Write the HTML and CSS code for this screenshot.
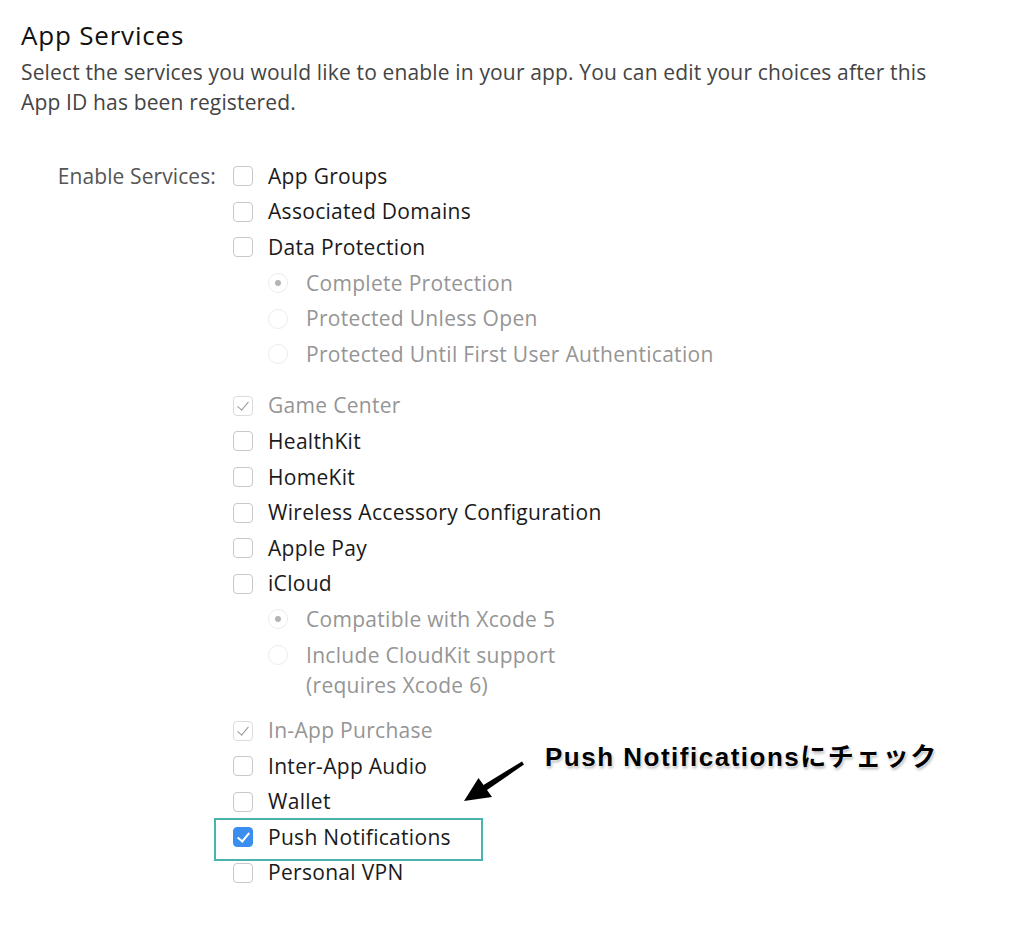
FILE: index.html
```html
<!DOCTYPE html>
<html lang="en">
<head>
  <meta charset="UTF-8">
  <title>App Services</title>
  <link rel="stylesheet" href="styles.css">
</head>
<body>
  <main class="page">
    <h1 class="title">App Services</h1>
    <p class="intro">Select the services you would like to enable in your app. You can edit your choices after this App ID has been registered.</p>

    <div class="services">
      <div class="services-label">Enable Services:</div>
      <ul class="service-list">
        <li class="service"><span class="box"></span>App Groups</li>
        <li class="service"><span class="box"></span>Associated Domains</li>
        <li class="service"><span class="box"></span>Data Protection</li>
        <li>
          <ul class="options">
            <li class="option"><span class="radio on"></span>Complete Protection</li>
            <li class="option"><span class="radio"></span>Protected Unless Open</li>
            <li class="option"><span class="radio"></span>Protected Until First User Authentication</li>
          </ul>
        </li>
        <li class="service disabled"><span class="box checked"></span>Game Center</li>
        <li class="service"><span class="box"></span>HealthKit</li>
        <li class="service"><span class="box"></span>HomeKit</li>
        <li class="service"><span class="box"></span>Wireless Accessory Configuration</li>
        <li class="service"><span class="box"></span>Apple Pay</li>
        <li class="service"><span class="box"></span>iCloud</li>
        <li>
          <ul class="options options-tight">
            <li class="option"><span class="radio on"></span>Compatible with Xcode 5</li>
            <li class="option"><span class="radio"></span><span>Include CloudKit support<br>(requires Xcode 6)</span></li>
          </ul>
        </li>
        <li class="service disabled"><span class="box checked"></span>In-App Purchase</li>
        <li class="service"><span class="box"></span>Inter-App Audio</li>
        <li class="service"><span class="box"></span>Wallet</li>
        <li class="service highlight"><span class="box active"></span>Push Notifications</li>
        <li class="service"><span class="box"></span>Personal VPN</li>
      </ul>
    </div>

    <div class="callout">Push Notificationsにチェック</div>
    <svg class="callout-arrow" width="80" height="55" viewBox="455 755 80 55">
      <polygon points="464,801 478.5,778 483.5,785 522,761.5 524,764.5 487,790 492,797" fill="#000"/>
    </svg>
  </main>
</body>
</html>
```

FILE: styles.css
```css
* {
  margin: 0;
  padding: 0;
  box-sizing: border-box;
}

body {
  background: #fff;
  font-family: 'Open Sans', 'Noto Sans', sans-serif;
  color: #222;
}

.page {
  position: relative;
  padding: 18px 0 0 21px;
  min-height: 927px;
}

.title {
  font-size: 26px;
  font-weight: 400;
  letter-spacing: 0.8px;
  color: #111;
  line-height: 34px;
}

.intro {
  font-size: 21px;
  letter-spacing: 0.15px;
  line-height: 30px;
  color: #444;
  max-width: 930px;
  margin-top: 5px;
}

/* Services form */
.services {
  display: flex;
  gap: 17px;
  margin-top: 41px;
}

.services-label {
  width: 195px;
  text-align: right;
  font-size: 21px;
  letter-spacing: 0.1px;
  color: #555;
  line-height: 30px;
  padding-top: 2.8px;
}

.service-list,
.options {
  list-style: none;
}

.service,
.option {
  display: flex;
  align-items: flex-start;
  font-size: 21px;
  letter-spacing: 0.3px;
  line-height: 30px;
  padding: 2.8px 0;
}

.service {
  gap: 15px;
  color: #1a1a1a;
}

.service.disabled,
.option {
  color: #959595;
}

.options {
  padding-left: 35px;
  margin-bottom: 16px;
}

.options-tight {
  margin-bottom: 10px;
}

.option {
  gap: 18px;
}

.box {
  flex: none;
  width: 20px;
  height: 20px;
  margin-top: 5.5px;
  border: 1px solid #c8c8c8;
  border-radius: 4px;
  background: #fff;
  position: relative;
}

.box.checked::after,
.box.active::after {
  content: "";
  position: absolute;
  left: 6px;
  top: 2px;
  width: 5px;
  height: 10px;
  border-right: 1.5px solid #999;
  border-bottom: 1.5px solid #999;
  transform: rotate(40deg);
}

.box.checked {
  border-color: #dcdcdc;
}

.box.active {
  background: #3a8ef0;
  border-color: #3a8ef0;
}

.box.active::after {
  border-color: #fff;
  border-width: 0 2px 2px 0;
}

.radio {
  flex: none;
  width: 20px;
  height: 20px;
  margin-top: 5.5px;
  border: 1px solid #ececec;
  border-radius: 50%;
  position: relative;
}

.radio.on::after {
  content: "";
  position: absolute;
  left: 6px;
  top: 6px;
  width: 6px;
  height: 6px;
  border-radius: 50%;
  background: #b5b5b5;
}

/* Annotation */
.highlight {
  position: relative;
}

.highlight::before {
  content: "";
  position: absolute;
  left: -19px;
  top: -1px;
  width: 265px;
  height: 39px;
  border: 2px solid #4ab3ac;
}

.callout {
  position: absolute;
  left: 545px;
  top: 740px;
  font-family: 'Liberation Sans', 'Noto Sans CJK JP', sans-serif;
  font-weight: 700;
  font-size: 26px;
  letter-spacing: 1.5px;
  line-height: 34px;
  color: #000;
  text-shadow: 0 0 2px #fff, 0 0 3px #fff, 1px 2px 3px rgba(0, 0, 0, 0.35);
}

.callout-arrow {
  position: absolute;
  left: 455px;
  top: 755px;
}
```
